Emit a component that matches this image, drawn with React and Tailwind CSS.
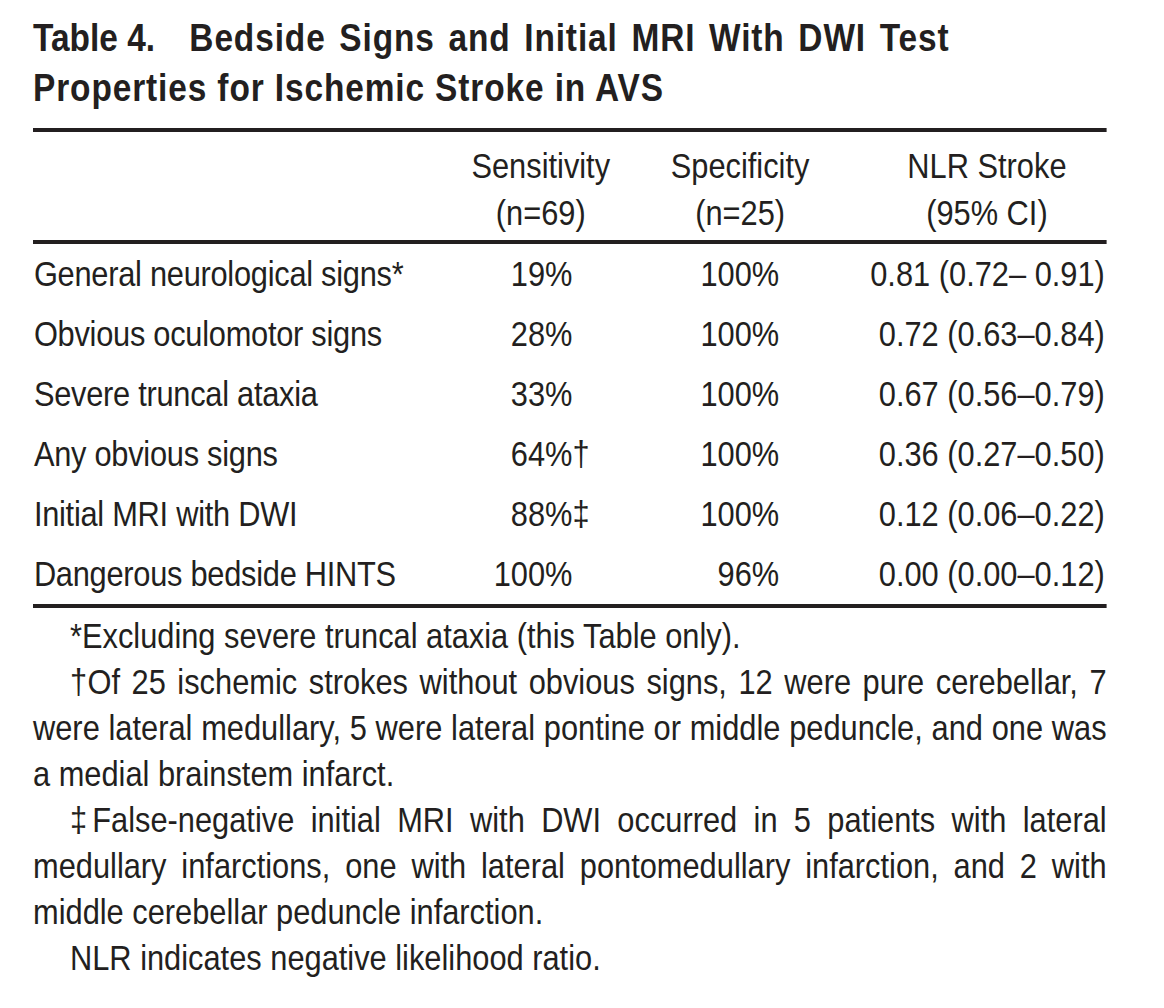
import React from "react";

const rows = [
  { label: "General neurological signs*", sens: "19%", mark: "", spec: "100%", nlr: "0.81 (0.72\u2013 0.91)" },
  { label: "Obvious oculomotor signs", sens: "28%", mark: "", spec: "100%", nlr: "0.72 (0.63\u20130.84)" },
  { label: "Severe truncal ataxia", sens: "33%", mark: "", spec: "100%", nlr: "0.67 (0.56\u20130.79)" },
  { label: "Any obvious signs", sens: "64%", mark: "\u2020", spec: "100%", nlr: "0.36 (0.27\u20130.50)" },
  { label: "Initial MRI with DWI", sens: "88%", mark: "\u2021", spec: "100%", nlr: "0.12 (0.06\u20130.22)" },
  { label: "Dangerous bedside HINTS", sens: "100%", mark: "", spec: "96%", nlr: "0.00 (0.00\u20130.12)" },
];

// footnote lines as printed; every line but the last of a paragraph is justified
const notes = [
  { mark: "", lines: ["*Excluding severe truncal ataxia (this Table only)."] },
  {
    mark: "\u2020",
    lines: [
      "Of 25 ischemic strokes without obvious signs, 12 were pure cerebellar, 7",
      "were lateral medullary, 5 were lateral pontine or middle peduncle, and one was",
      "a medial brainstem infarct.",
    ],
  },
  {
    mark: "\u2021",
    lines: [
      "False-negative initial MRI with DWI occurred in 5 patients with lateral",
      "medullary infarctions, one with lateral pontomedullary infarction, and 2 with",
      "middle cerebellar peduncle infarction.",
    ],
  },
  { mark: "", lines: ["NLR indicates negative likelihood ratio."] },
];

const App = () => {
  return (
    <div className="min-h-screen overflow-hidden bg-white text-[#231f20] font-['Liberation_Sans',Arial,sans-serif]">
      {/* condensed type: the whole sheet is drawn 0.88 wide */}
      <div className="w-[1220px] ml-[33px] pt-[13px] origin-top-left scale-x-[0.88]">
        {/* Title */}
        <h1 className="text-[38px] leading-[50px] font-bold whitespace-nowrap">
          <div className="flex">
            <span>Table 4.</span>
            <span className="w-[39px]"></span>
            <span className="tracking-[1px] [word-spacing:4px]">Bedside Signs and Initial MRI With DWI Test</span>
          </div>
          <div className="tracking-[1px]">Properties for Ischemic Stroke in AVS</div>
        </h1>

        {/* Table head */}
        <div className="mt-[15px] border-t-[4px] border-[#231f20]">
          <div className="flex text-[35px] leading-[47px] pt-[10px] pb-[4px] text-center whitespace-nowrap">
            <div className="w-[456px]"></div>
            <div className="w-[242px]">
              Sensitivity
              <br />
              (n=69)
            </div>
            <div className="w-[211px]">
              Specificity
              <br />
              (n=25)
            </div>
            <div className="w-[272px] ml-auto">
              NLR Stroke
              <br />
              (95% CI)
            </div>
          </div>
        </div>

        {/* Table body */}
        <div className="border-t-[4px] border-[#231f20]">
          {rows.map((r) => (
            <div key={r.label} className="flex text-[35px] leading-[60px] whitespace-nowrap">
              <div className="w-[456px] pl-px tracking-[-0.3px]">{r.label}</div>
              <div className="w-[157px] text-right">{r.sens}</div>
              <div className="w-[86px] text-left">{r.mark}</div>
              <div className="w-[149px] text-right">{r.spec}</div>
              <div className="flex-1 text-right pr-[2px]">{r.nlr}</div>
            </div>
          ))}
        </div>

        {/* Footnotes */}
        <div className="border-t-[4px] border-[#231f20] pt-[5px] text-[35px] leading-[46px]">
          {notes.map((n, i) => (
            <div key={i}>
              {n.lines.map((line, j) => (
                <div
                  key={j}
                  className={`whitespace-nowrap ${j === 0 ? "pl-[42px]" : ""} ${
                    j < n.lines.length - 1 ? "text-justify [text-align-last:justify]" : ""
                  }`}
                >
                  {j === 0 && n.mark && <span className="mr-[-3px]">{n.mark}</span>}
                  {line}
                </div>
              ))}
            </div>
          ))}
        </div>
      </div>
    </div>
  );
};

export default App;
